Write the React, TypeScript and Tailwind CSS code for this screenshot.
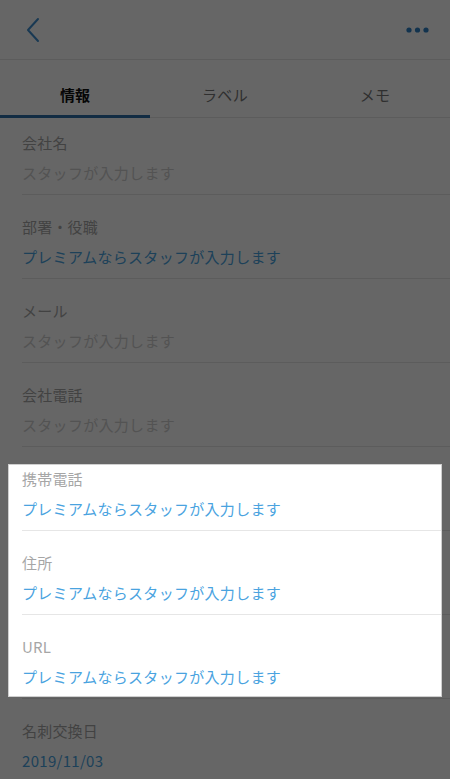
import React from "react";

type Row = { label: string; value: string; kind: "placeholder" | "blue" };

const rows: Row[] = [
  { label: "会社名", value: "スタッフが入力します", kind: "placeholder" },
  { label: "部署・役職", value: "プレミアムならスタッフが入力します", kind: "blue" },
  { label: "メール", value: "スタッフが入力します", kind: "placeholder" },
  { label: "会社電話", value: "スタッフが入力します", kind: "placeholder" },
  { label: "携帯電話", value: "プレミアムならスタッフが入力します", kind: "blue" },
  { label: "住所", value: "プレミアムならスタッフが入力します", kind: "blue" },
  { label: "URL", value: "プレミアムならスタッフが入力します", kind: "blue" },
  { label: "名刺交換日", value: "2019/11/03", kind: "blue" },
];

export default function App() {
  return (
    <div
      className="relative w-[450px] h-[779px] overflow-hidden bg-white"
      style={{ fontFamily: '"Noto Sans CJK JP", "Noto Sans", sans-serif' }}
    >
      {/* Header */}
      <div className="h-[60px] flex items-center justify-between px-[24px] border-b border-[#e6e6e6]">
        <svg width="16" height="26" viewBox="0 0 16 26" className="ml-[1px]">
          <path d="M13 2 L3 13 L13 24" fill="none" stroke="#3f8fd0" strokeWidth="2" strokeLinecap="round" strokeLinejoin="round" />
        </svg>
        <svg width="24" height="8" viewBox="0 0 24 8" className="mr-[-4px]">
          <circle cx="3" cy="4" r="2.6" fill="#2d7fc4" />
          <circle cx="11.5" cy="4" r="2.6" fill="#2d7fc4" />
          <circle cx="20" cy="4" r="2.6" fill="#2d7fc4" />
        </svg>
      </div>

      {/* Tabs */}
      <div className="flex h-[58px] border-b border-[#e6e6e6]">
        <div className="relative flex-1 flex justify-center pt-[25px]">
          <span className="text-[15px] leading-[20px] font-bold text-[#111]">情報</span>
          <div className="absolute left-0 right-0 bottom-[-1px] h-[3px] bg-[#2f6fa8]" />
        </div>
        <div className="flex-1 flex justify-center pt-[25px]">
          <span className="text-[15px] leading-[20px] text-[#777] tracking-[0.3px]">ラベル</span>
        </div>
        <div className="flex-1 flex justify-center pt-[25px]">
          <span className="text-[15px] leading-[20px] text-[#777] tracking-[0.3px]">メモ</span>
        </div>
      </div>

      {/* Rows */}
      <div className="pl-[22px]">
        {rows.map((r, i) => (
          <div
            key={r.label}
            className={`${i === 0 ? "pt-[15px]" : "pt-[22px]"} pb-[11px] border-b border-[#e6e6e6]`}
          >
            <div className="text-[15px] leading-[20px] text-[#a6a6a6] tracking-[0.2px]">{r.label}</div>
            <div
              className={`mt-[10px] text-[15px] leading-[20px] tracking-[0.3px] ${
                r.kind === "blue" ? "text-[#4aa3df]" : "text-[#cfcfcf]"
              }`}
            >
              {r.value}
            </div>
          </div>
        ))}
      </div>

      {/* Spotlight overlay */}
      <div className="absolute left-[8px] top-[464px] w-[434px] h-[233px] border border-[#cfcfcf] shadow-[0_0_0_2000px_rgba(0,0,0,0.6)] pointer-events-none" />
    </div>
  );
}
